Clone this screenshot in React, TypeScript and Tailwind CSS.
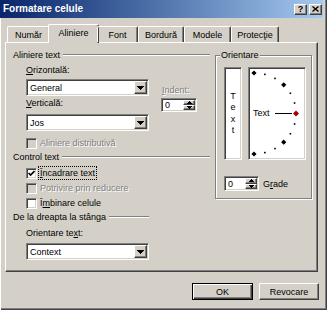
import React from "react";

const raised =
  "border border-t-white border-l-white border-r-[#404040] border-b-[#404040] shadow-[inset_-1px_-1px_0_#808080]";
const sunken =
  "border border-t-[#808080] border-l-[#808080] border-r-white border-b-white shadow-[inset_1px_1px_0_#404040,inset_-1px_-1px_0_#d4d0c8]";
const disabledText = "text-[#808080] [text-shadow:1px_1px_0_#ffffff]";

function Down({ w = 7, h = 4 }: { w?: number; h?: number }) {
  return (
    <svg width={w} height={h} viewBox={`0 0 ${w} ${h}`} shapeRendering="crispEdges">
      <path d={`M0 0H${w}L${w / 2} ${h}Z`} fill="#000" />
    </svg>
  );
}

function Up({ w = 5, h = 3 }: { w?: number; h?: number }) {
  return (
    <svg width={w} height={h} viewBox={`0 0 ${w} ${h}`} shapeRendering="crispEdges">
      <path d={`M0 ${h}H${w}L${w / 2} 0Z`} fill="#000" />
    </svg>
  );
}

function Combo({ text }: { text: string }) {
  return (
    <div className={`w-[123px] h-[17px] bg-white flex p-[1px] ${sunken}`}>
      <div className="flex-1 flex items-center pl-[2px]">{text}</div>
      <div className={`w-[13px] h-full bg-[#d4d0c8] flex items-center justify-center ${raised}`}>
        <Down />
      </div>
    </div>
  );
}

function Spin({ cls }: { cls: string }) {
  return (
    <div className={`bg-white flex p-[1px] ${sunken} ${cls}`}>
      <div className="flex-1 flex items-center pl-[2px]">0</div>
      <div className="w-[12px] flex flex-col">
        <div className={`flex-1 bg-[#d4d0c8] flex items-center justify-center ${raised}`}>
          <Up />
        </div>
        <div className={`flex-1 bg-[#d4d0c8] flex items-center justify-center ${raised}`}>
          <Down w={5} h={3} />
        </div>
      </div>
    </div>
  );
}

function Check({ checked, disabled }: { checked?: boolean; disabled?: boolean }) {
  return (
    <div
      className={`w-[11px] h-[11px] flex items-center justify-center ${sunken} ${
        disabled ? "bg-[#d4d0c8]" : "bg-white"
      }`}
    >
      {checked && (
        <svg width="7" height="7" viewBox="0 0 7 7">
          <path d="M0.6 3 L2.6 5 L6.5 1" stroke="#000" strokeWidth="1.7" fill="none" />
        </svg>
      )}
    </div>
  );
}

function Header({ children, cls = "" }: { children: React.ReactNode; cls?: string }) {
  return (
    <div className={`flex items-center h-[12px] ${cls}`}>
      <span className="whitespace-nowrap">{children}</span>
      <div className="flex-1 ml-[3px] h-[2px] border-t border-t-[#808080] border-b border-b-white" />
    </div>
  );
}

function Dial() {
  const cx = 5;
  const cy = 45.5;
  const rx = 42;
  const ry = 40.5;
  const items: React.ReactNode[] = [];
  for (let a = -90; a <= 90; a += 15) {
    const rad = (a * Math.PI) / 180;
    const x = cx + rx * Math.cos(rad);
    const y = cy - ry * Math.sin(rad);
    if (a === 0) {
      const r = 3;
      items.push(
        <polygon
          key={a}
          points={`${x},${y - r} ${x + r},${y} ${x},${y + r} ${x - r},${y}`}
          fill="#a00000"
        />
      );
    } else if (a % 45 === 0) {
      const r = 2.6;
      items.push(
        <polygon
          key={a}
          points={`${x},${y - r} ${x + r},${y} ${x},${y + r} ${x - r},${y}`}
          fill="#000"
        />
      );
    } else {
      items.push(<rect key={a} x={x - 0.8} y={y - 0.8} width="1.6" height="1.6" fill="#000" />);
    }
  }
  return (
    <svg className="absolute left-0 top-0" width="56" height="91" viewBox="0 0 56 91">
      <line x1="26" y1="45.5" x2="43" y2="45.5" stroke="#000" strokeWidth="1" />
      {items}
    </svg>
  );
}

const tabs: { label: string; cls: string; active?: boolean }[] = [
  { label: "Număr", cls: "w-[43px]" },
  { label: "Aliniere", cls: "w-[51px]", active: true },
  { label: "Font", cls: "w-[41px]" },
  { label: "Bordură", cls: "w-[46px]" },
  { label: "Modele", cls: "w-[47px]" },
  { label: "Protecţie", cls: "w-[48px]" },
];

export default function App() {
  return (
    <div className="w-[327px] h-[310px] bg-[#d4d0c8] font-['Liberation_Sans',Arial,sans-serif] text-[9px] leading-[12px] text-black shadow-[inset_1px_0_0_#ffffff,inset_-1px_-1px_0_#404040,inset_-2px_-2px_0_#808080] flex flex-col overflow-hidden select-none">
      {/* Title bar */}
      <div className="h-[18px] mr-[4px] flex items-center bg-linear-to-r from-[#0a246a] to-[#a6caf0] pl-[3px] pr-[1px]">
        <span className="flex-1 text-white font-bold text-[10px]">Formatare celule</span>
        <div className={`w-[13px] h-[11px] bg-[#d4d0c8] flex items-center justify-center font-bold text-[9px] leading-none ${raised}`}>
          ?
        </div>
        <div className={`ml-[2px] w-[13px] h-[11px] bg-[#d4d0c8] flex items-center justify-center ${raised}`}>
          <svg width="7" height="6" viewBox="0 0 7 6">
            <path d="M0.5 0.5 L6.5 5.5 M6.5 0.5 L0.5 5.5" stroke="#000" strokeWidth="1.4" />
          </svg>
        </div>
      </div>

      {/* Tabs */}
      <div className="mt-[6px] ml-[7px] h-[18px] flex items-end relative z-10">
        {tabs.map((t) =>
          t.active ? (
            <div
              key={t.label}
              className={`${t.cls} -mx-[2px] -mb-[1px] h-[19px] bg-[#d4d0c8] flex items-center justify-center rounded-t-[2px] border-t border-l border-r border-t-white border-l-white border-r-[#404040] shadow-[inset_-1px_0_0_#808080]`}
            >
              <span className="-mt-[2px]">{t.label}</span>
            </div>
          ) : (
            <div
              key={t.label}
              className={`${t.cls} h-[16px] flex items-center justify-center rounded-t-[2px] border-t border-l border-r border-t-white border-l-white border-r-[#404040] shadow-[inset_-1px_0_0_#808080]`}
            >
              {t.label}
            </div>
          )
        )}
      </div>

      {/* Panel */}
      <div
        className={`ml-[5px] w-[313px] h-[230px] flex border-t border-l border-r border-b border-t-white border-l-white border-r-[#404040] border-b-[#404040] shadow-[inset_-1px_-1px_0_#808080]`}
      >
        {/* Left column */}
        <div className="ml-[7px] w-[197px] flex flex-col pt-[6px]">
          <Header>Aliniere text</Header>
          <div className="flex">
            <div className="ml-[13px] flex flex-col">
              <div className="mt-[3px]">
                <span className="underline">O</span>rizontală:
              </div>
              <div className="mt-[3px]">
                <Combo text="General" />
              </div>
              <div className="mt-[1px]">
                <span className="underline">V</span>erticală:
              </div>
              <div className="mt-[5px]">
                <Combo text="Jos" />
              </div>
            </div>
            <div className="ml-[12px] flex flex-col">
              <div className={`mt-[23px] ml-[1px] ${disabledText}`}>
                <span className="underline">I</span>ndent:
              </div>
              <div className="mt-[2px]">
                <Spin cls="w-[36px] h-[14px]" />
              </div>
            </div>
          </div>

          <div className="mt-[6px] ml-[13px] h-[12px] flex items-center">
            <Check disabled />
            <span className={`ml-[3px] ${disabledText}`}>Aliniere distributivă</span>
          </div>

          <Header cls="mt-[2px]">Control text</Header>

          <div className="mt-[4px] ml-[13px] h-[12px] flex items-center">
            <Check checked />
            <span className="ml-[1px] px-[1px] border border-dotted border-black leading-[12px]">
              <span className="underline">Î</span>ncadrare text
            </span>
          </div>
          <div className="mt-[3px] ml-[13px] h-[12px] flex items-center">
            <Check disabled />
            <span className={`ml-[3px] ${disabledText}`}>Potrivire prin reducere</span>
          </div>
          <div className="mt-[3px] ml-[13px] h-[12px] flex items-center">
            <Check />
            <span className="ml-[3px]">
              Î<span className="underline">m</span>binare celule
            </span>
          </div>

          <Header cls="mt-[2px] w-[136px]">De la dreapta la stânga</Header>

          <div className="mt-[4px] ml-[13px]">
            Orientare te<span className="underline">x</span>t:
          </div>
          <div className="mt-[4px] ml-[13px]">
            <Combo text="Context" />
          </div>
        </div>

        {/* Orientare group */}
        <div className="ml-[5px] mt-[12px] w-[97px] h-[144px] relative border border-[#808080] shadow-[1px_1px_0_#ffffff,inset_1px_1px_0_#ffffff] flex flex-col pl-[8px] pt-[11px]">
          <span className="absolute left-[4px] top-[-7px] px-[1px] bg-[#d4d0c8]">Orientare</span>
          <div className="flex">
            <div className={`w-[18px] h-[93px] bg-white flex flex-col items-center justify-center leading-[11.5px] ${sunken}`}>
              <span>T</span>
              <span>e</span>
              <span>x</span>
              <span>t</span>
            </div>
            <div className={`ml-[6px] w-[58px] h-[93px] bg-white relative ${sunken}`}>
              <Dial />
              <span className="absolute left-[4px] top-[39px]">Text</span>
            </div>
          </div>
          <div className="mt-[16px] flex items-center">
            <Spin cls="w-[35px] h-[15px]" />
            <span className="ml-[4px]">
              G<span className="underline">r</span>ade
            </span>
          </div>
        </div>
      </div>

      {/* Buttons */}
      <div className="mt-[11px] ml-[192px] flex gap-[6px]">
        <div className="w-[61px] h-[17px] flex items-center justify-center border border-black shadow-[inset_1px_1px_0_#ffffff,inset_-1px_-1px_0_#404040,inset_-2px_-2px_0_#808080]">
          OK
        </div>
        <div className={`w-[60px] h-[17px] flex items-center justify-center ${raised}`}>Revocare</div>
      </div>
    </div>
  );
}
